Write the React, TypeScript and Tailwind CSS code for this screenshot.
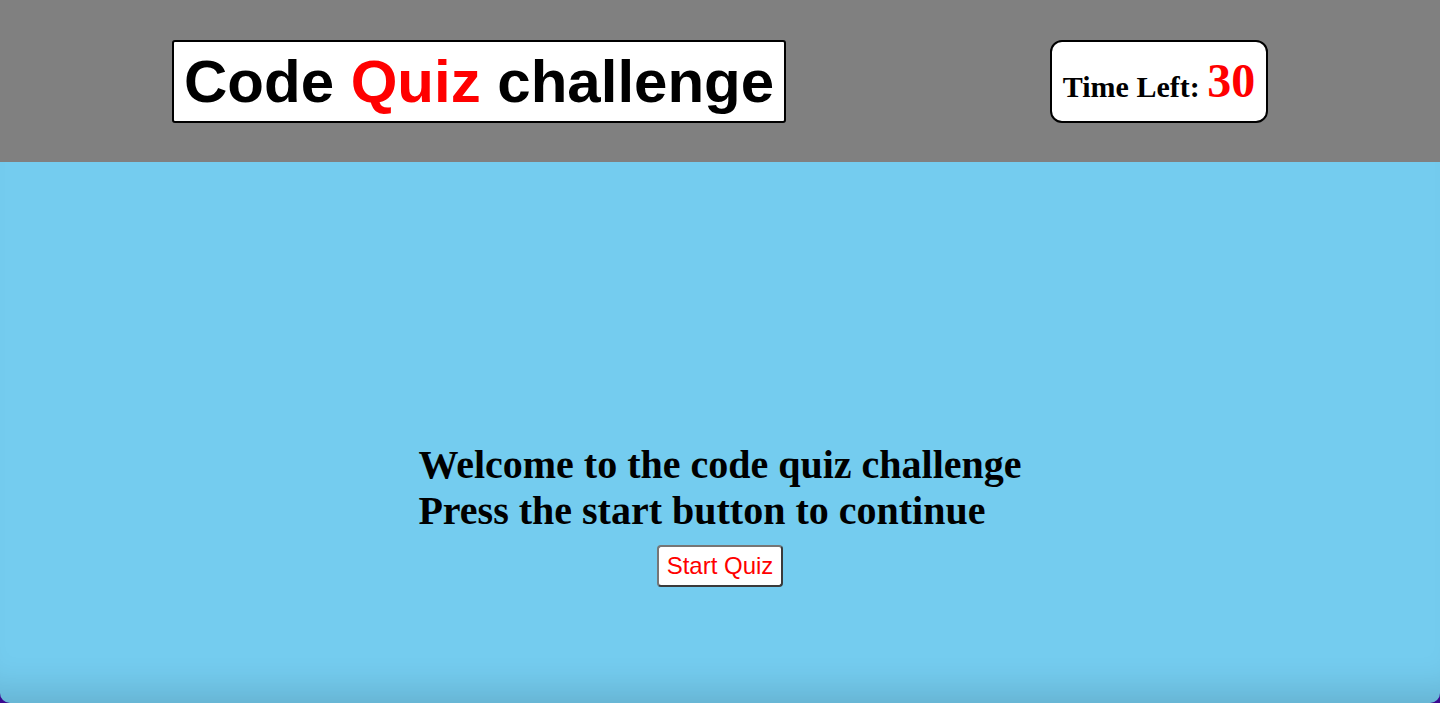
const App = () => {
    return (
        <div className="bg-[#3b0a8f] h-[703px] w-full">
            <div className="flex flex-col h-full rounded-b-[10px] overflow-hidden">
                <header className="bg-[#808080] h-[162px] flex items-center justify-between px-[172px] shrink-0">
                    <div className="bg-white border-2 border-black rounded-[3px] px-[10px] py-[6px] font-['Liberation_Sans',Arial,sans-serif] font-bold text-[60px] leading-[67px] text-black whitespace-nowrap">
                        Code <span className="text-[#ff0000]">Quiz</span> challenge
                    </div>
                    <div className="bg-white border-2 border-black rounded-[12px] w-[218px] h-[83px] pt-[4px] flex items-center justify-center font-['Liberation_Serif','Times_New_Roman',serif] font-bold text-black">
                        <span className="text-[30px] leading-[53px]">
                            Time Left: <span className="text-[48px] text-[#ff0000]">30</span>
                        </span>
                    </div>
                </header>
                <main className="flex-1 bg-[#74ccef] flex flex-col items-center pt-[280px] shadow-[inset_0_-40px_36px_-28px_rgba(0,0,0,0.14)]">
                    <div className="font-['Liberation_Serif','Times_New_Roman',serif] font-bold text-[40px] leading-[46px] text-black">
                        <div>Welcome to the code quiz challenge</div>
                        <div>Press the start button to continue</div>
                    </div>
                    <button className="mt-[11px] bg-white border-2 border-[#767676] border-r-[#3a3a3a] border-b-[#3a3a3a] rounded-[4px] px-[8px] py-[5px] font-['Liberation_Sans',Arial,sans-serif] text-[24px] leading-[28px] text-[#ff0000]">
                        Start Quiz
                    </button>
                </main>
            </div>
        </div>
    )
}

export default App;
